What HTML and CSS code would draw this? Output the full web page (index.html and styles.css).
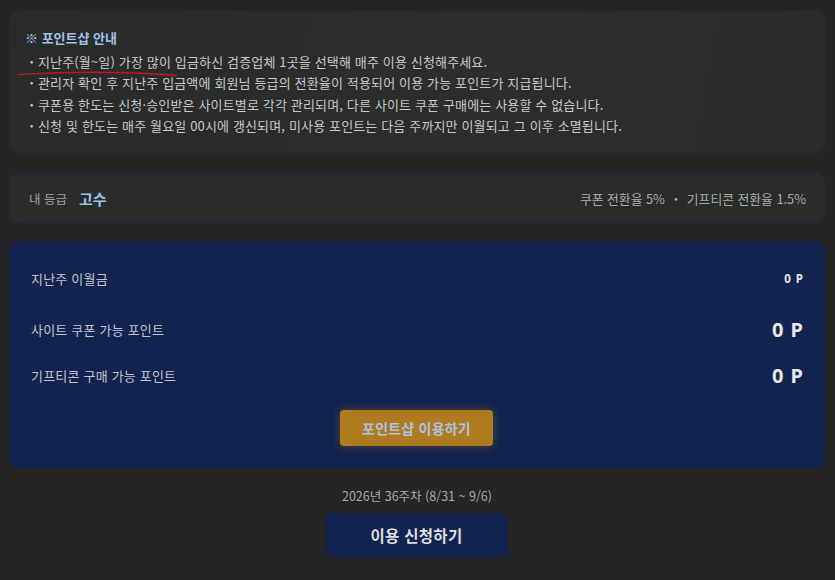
FILE: index.html
```html
<!DOCTYPE html>
<html lang="ko">
<head>
<meta charset="utf-8">
<link rel="stylesheet" href="styles.css">
</head>
<body>
<div class="page">
  <section class="info-card">
    <h2 class="info-title">※ 포인트샵 안내</h2>
    <ul class="info-list">
      <li><span class="dot">·</span>지난주(월~일) 가장 많이 입금하신 검증업체 1곳을 선택해 매주 이용 신청해주세요.</li>
      <li><span class="dot">·</span>관리자 확인 후 지난주 입금액에 회원님 등급의 전환율이 적용되어 이용 가능 포인트가 지급됩니다.</li>
      <li><span class="dot">·</span>쿠폰용 한도는 신청·승인받은 사이트별로 각각 관리되며, 다른 사이트 쿠폰 구매에는 사용할 수 없습니다.</li>
      <li><span class="dot">·</span>신청 및 한도는 매주 월요일 00시에 갱신되며, 미사용 포인트는 다음 주까지만 이월되고 그 이후 소멸됩니다.</li>
    </ul>
    <svg class="scribble" width="200" height="80" viewBox="0 0 200 80" aria-hidden="true">
      <path d="M8 62.6 Q 92 57.6 166 63.2" fill="none" stroke="#c8141a" stroke-width="1.4" stroke-linecap="round"/>
    </svg>
  </section>

  <section class="grade-card">
    <div class="grade-left">
      <span class="grade-label">내 등급</span>
      <span class="grade-name">고수</span>
    </div>
    <div class="grade-rates">쿠폰 전환율 5% <span class="sep">・</span> 기프티콘 전환율 1.5%</div>
  </section>

  <section class="point-card">
    <div class="point-row row-carry">
      <span class="point-label">지난주 이월금</span>
      <span class="point-value small">0 P</span>
    </div>
    <div class="point-row row-coupon">
      <span class="point-label">사이트 쿠폰 가능 포인트</span>
      <span class="point-value">0 P</span>
    </div>
    <div class="point-row">
      <span class="point-label">기프티콘 구매 가능 포인트</span>
      <span class="point-value">0 P</span>
    </div>
    <div class="shop-wrap">
      <button class="shop-btn">포인트샵 이용하기</button>
    </div>
  </section>

  <p class="week">2026년 36주차 (8/31 ~ 9/6)</p>
  <div class="apply-wrap">
    <button class="apply-btn">이용 신청하기</button>
  </div>
</div>
</body>
</html>
```

FILE: styles.css
```css
* { box-sizing: border-box; }

html, body {
  margin: 0;
  padding: 0;
  background: #242524;
}

body {
  font-family: "Noto Sans CJK KR", "Noto Sans", sans-serif;
  color: #c4c4c4;
  width: 835px;
  height: 580px;
  overflow: hidden;
}

.page {
  padding: 11px 10px 0 9px;
  display: flex;
  flex-direction: column;
}

.info-card {
  position: relative;
  border: 1px solid #1e2b4b;
  border-radius: 9px;
  background: linear-gradient(100deg, #292a2a 0%, #2c2d2d 60%, #2a2b2b 100%);
  padding: 18px 15px 16px 15px;
}

.info-title {
  margin: 0;
  font-size: 13px;
  line-height: 16px;
  font-weight: 700;
  color: #a0c2e8;
}

.info-list {
  list-style: none;
  margin: 5px 0 0 0;
  padding: 0;
}

.info-list li {
  display: flex;
  align-items: center;
  height: 21.3px;
  font-size: 13px;
  line-height: 21.3px;
  letter-spacing: 0.15px;
  color: #c8c8c8;
  white-space: nowrap;
}

.dot {
  flex: none;
  width: 13px;
  text-align: center;
  font-weight: 700;
  line-height: 1;
  letter-spacing: 0;
}

.scribble {
  position: absolute;
  left: 0;
  top: 0;
  pointer-events: none;
}

.grade-card {
  margin-top: 20px;
  height: 50px;
  border: 1px solid #1e2b4b;
  border-radius: 9px;
  background: #2a2b2b;
  padding: 0 18px 0 19px;
  display: flex;
  align-items: center;
  justify-content: space-between;
}

.grade-left {
  display: flex;
  align-items: center;
  gap: 12px;
}

.grade-label {
  font-size: 12.5px;
  color: #a3a3a3;
}

.grade-name {
  font-size: 15px;
  font-weight: 700;
  color: #9cc3ec;
}

.grade-rates {
  font-size: 12.8px;
  color: #ababab;
}

.sep {
  display: inline-block;
  margin: 0 1px;
}

.point-card {
  margin-top: 18px;
  height: 227px;
  background: #12234f;
  border-radius: 9px;
  padding: 22px 22px 0 22px;
  display: flex;
  flex-direction: column;
}

.point-row {
  height: 30px;
  display: flex;
  align-items: center;
  justify-content: space-between;
}

.row-carry { margin-bottom: 21px; }
.row-coupon { margin-bottom: 16px; }

.point-label {
  font-size: 13px;
  letter-spacing: 0.2px;
  color: #c2c6cf;
}

.point-value {
  font-family: "Noto Sans", sans-serif;
  font-size: 20px;
  font-weight: 700;
  letter-spacing: 1px;
  color: #e6e6e6;
  margin-right: -1px;
}

.point-value.small {
  font-size: 11.5px;
  letter-spacing: 1px;
}

.shop-wrap {
  margin-top: 20px;
  display: flex;
  justify-content: center;
}

.shop-btn {
  width: 153px;
  height: 36px;
  border: none;
  border-radius: 4px;
  background: #b07a1f;
  color: #a9c5e2;
  font-family: "Noto Sans CJK KR", "Noto Sans", sans-serif;
  font-size: 14px;
  letter-spacing: 0.2px;
  font-weight: 700;
  box-shadow: 0 0 8px rgba(176, 122, 31, 0.45);
  padding: 0;
  margin-left: -1px;
}

.week {
  margin: 20px 0 0 0;
  text-align: center;
  font-size: 12.5px;
  line-height: 16px;
  color: #a9a9a9;
}

.apply-wrap {
  margin-top: 9px;
  display: flex;
  justify-content: center;
}

.apply-btn {
  width: 183px;
  height: 44px;
  border: none;
  border-radius: 7px;
  background: #12234f;
  color: #dedede;
  font-family: "Noto Sans CJK KR", "Noto Sans", sans-serif;
  font-size: 15.5px;
  letter-spacing: 0.3px;
  font-weight: 700;
  padding: 0;
  margin-left: -1px;
}
```
